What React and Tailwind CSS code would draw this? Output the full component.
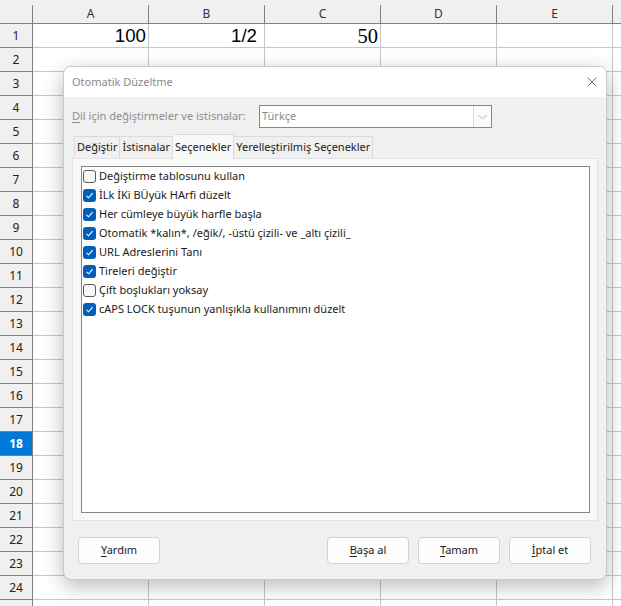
import React from "react";

const COLS = ["A", "B", "C", "D", "E", ""];
const ROWS = Array.from({ length: 25 }, (_, i) => i + 1);

const ITEMS = [
  ["Değiştirme tablosunu kullan", false],
  ["İLk İKi BÜyük HArfi düzelt", true],
  ["Her cümleye büyük harfle başla", true],
  ["Otomatik *kalın*, /eğik/, -üstü çizili- ve _altı çizili_", true],
  ["URL Adreslerini Tanı", true],
  ["Tireleri değiştir", true],
  ["Çift boşlukları yoksay", false],
  ["cAPS LOCK tuşunun yanlışıkla kullanımını düzelt", true],
];

function Cell({ row, col }) {
  let content = null;
  if (row === 1 && col === 0)
    content = (
      <span className="font-['Liberation_Sans',sans-serif] text-[18.7px] pr-[2px]">100</span>
    );
  if (row === 1 && col === 1)
    content = (
      <span className="font-['Liberation_Sans',sans-serif] text-[18.7px] pr-[7px]">1/2</span>
    );
  if (row === 1 && col === 2)
    content = (
      <span className="font-['Liberation_Serif',serif] text-[20.5px] pr-[2px]">50</span>
    );
  return (
    <div className="w-[116px] h-[24px] shrink-0 border-r border-b border-[#c6c6c6] bg-white flex items-center justify-end pt-[1px] text-black leading-none">
      {content}
    </div>
  );
}

function Check({ checked }) {
  if (checked)
    return (
      <div className="w-[13px] h-[13px] rounded-[3px] bg-[#005fb8] flex items-center justify-center shrink-0">
        <svg width="9" height="9" viewBox="0 0 9 9">
          <path d="M1.5 4.8 L3.6 6.8 L7.6 2.2" fill="none" stroke="white" strokeWidth="1.1" />
        </svg>
      </div>
    );
  return <div className="w-[13px] h-[13px] rounded-[3px] border border-[#5a5a5a] bg-[#f7f7f7] shrink-0" />;
}

function Btn({ u, rest }) {
  return (
    <div className="w-[82px] h-[27px] rounded-[4px] border border-[#d2d2d2] bg-[#fdfdfd] flex items-center justify-center text-[11px] text-[#1b1b1b]">
      <span>
        <span className="underline underline-offset-[2px]">{u}</span>
        {rest}
      </span>
    </div>
  );
}

export default function App() {
  return (
    <div className="relative w-[621px] h-[606px] overflow-hidden bg-white font-['Noto_Sans',sans-serif]">
      {/* Column header */}
      <div className="flex h-[24px] bg-[#f0f0f0] border-b border-[#808080]">
        <div className="w-[33px] shrink-0 mt-[5px] border-r border-[#808080]" />
        {COLS.map((c, i) => (
          <div
            key={i}
            className="w-[116px] shrink-0 mt-[5px] border-r border-[#808080] flex items-center justify-center text-[12px] text-[#333] leading-none"
          >
            {c}
          </div>
        ))}
      </div>
      {/* Rows */}
      {ROWS.map((r) => (
        <div key={r} className="flex h-[24px]">
          <div
            className={
              r === 18
                ? "w-[33px] shrink-0 border-r border-b border-[#808080] bg-[#0078d7] text-white font-bold flex items-center justify-center text-[12px] leading-none"
                : "w-[33px] shrink-0 border-r border-b border-[#808080] bg-[#f0f0f0] text-[#222] flex items-center justify-center text-[12px] leading-none"
            }
          >
            {r < 25 ? r : ""}
          </div>
          {COLS.map((c, i) => (
            <Cell key={i} row={r} col={i} />
          ))}
        </div>
      ))}

      {/* Dialog */}
      <div className="absolute left-[63px] top-[66px] w-[544px] h-[514px] rounded-[8px] border border-[#c9c9c9] bg-[#f0f0f0] shadow-[0_6px_20px_rgba(0,0,0,0.28)] flex flex-col overflow-hidden">
        <div className="h-[30px] bg-white flex items-center justify-between pl-[8px] pr-[9px] shrink-0">
          <span className="text-[11px] text-[#8a8a8a]">Otomatik Düzeltme</span>
          <svg width="10" height="10" viewBox="0 0 10 10">
            <path d="M0.5 0.5 L9.5 9.5 M9.5 0.5 L0.5 9.5" stroke="#707070" strokeWidth="1" fill="none" />
          </svg>
        </div>
        <div className="flex-1 flex flex-col px-[8px]">
          {/* Language row */}
          <div className="mt-[8px] h-[23px] flex items-center">
            <div className="w-[187px] whitespace-nowrap text-[11px] text-[#8d8d8d]">
              <span className="underline underline-offset-[2px]">D</span>il için değiştirmeler ve istisnalar:
            </div>
            <div className="w-[233px] h-[23px] border border-[#878787] bg-white flex items-center justify-between">
              <span className="pl-[2px] text-[11px] text-[#8d8d8d]">Türkçe</span>
              <div className="w-[18px] h-[21px] border-l border-[#dcdcdc] bg-[#fbfbfb] flex items-center justify-center">
                <svg width="9" height="6" viewBox="0 0 9 6">
                  <path d="M0.5 1 L4.5 5 L8.5 1" stroke="#b3b3b3" strokeWidth="1" fill="none" />
                </svg>
              </div>
            </div>
          </div>
          {/* Tabs */}
          <div className="mt-[6px] h-[24px] flex items-end pl-[2px] relative z-10">
            <div className="h-[22px] px-[2px] border border-b-0 border-[#dadada] bg-[#f0f0f0] flex items-center text-[11px] text-[#1b1b1b]">
              Değiştir
            </div>
            <div className="h-[22px] px-[2px] border border-l-0 border-b-0 border-[#dadada] bg-[#f0f0f0] flex items-center text-[11px] text-[#1b1b1b]">
              İstisnalar
            </div>
            <div className="h-[25px] mb-[-1px] px-[2px] border border-l-0 border-b-0 border-[#dadada] bg-[#f9f9f9] flex items-center text-[11px] text-[#1b1b1b]">
              Seçenekler
            </div>
            <div className="h-[22px] px-[2px] border border-l-0 border-b-0 border-[#dadada] bg-[#f0f0f0] flex items-center text-[11px] text-[#1b1b1b]">
              Yerelleştirilmiş Seçenekler
            </div>
          </div>
          {/* Pane */}
          <div className="h-[363px] border border-[#e2e2e2] bg-[#f9f9f9] pt-[7px] pb-[7px] pl-[8px] pr-[7px] flex">
            <div className="flex-1 border border-[#858585] bg-white flex flex-col pl-[1px]">
              {ITEMS.map(([t, c], i) => (
                <div key={i} className="h-[19px] flex items-center gap-[3px] text-[11px] text-[#1b1b1b]">
                  <Check checked={c} />
                  <span>{t}</span>
                </div>
              ))}
            </div>
          </div>
          {/* Buttons */}
          <div className="mt-[16px] flex items-center pl-[6px] pr-[7px]">
            <Btn u="Y" rest="ardım" />
            <div className="flex-1" />
            <div className="flex gap-[9px]">
              <Btn u="B" rest="aşa al" />
              <Btn u="T" rest="amam" />
              <Btn u="İ" rest="ptal et" />
            </div>
          </div>
        </div>
      </div>
    </div>
  );
}
